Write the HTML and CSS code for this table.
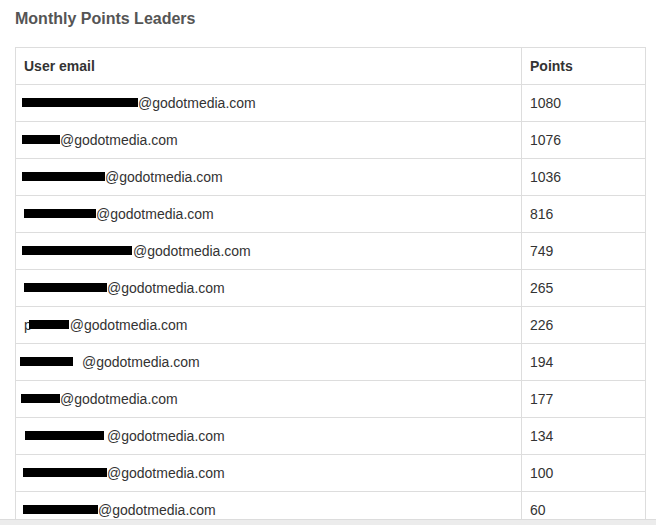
FILE: index.html
```html
<!DOCTYPE html>
<html>
<head>
<meta charset="utf-8">
<link rel="stylesheet" href="styles.css">
</head>
<body>
<div class="page">
  <h4 class="title">Monthly Points Leaders</h4>
  <table class="leaders">
    <thead>
      <tr><th class="col-email">User email</th><th class="col-points">Points</th></tr>
    </thead>
    <tbody>
      <tr><td><span class="redact" style="width:116px;margin-left:-2px"></span>@godotmedia.com</td><td>1080</td></tr>
      <tr><td><span class="redact" style="width:38px;margin-left:-2px"></span>@godotmedia.com</td><td>1076</td></tr>
      <tr><td><span class="redact" style="width:83px;margin-left:-2px"></span>@godotmedia.com</td><td>1036</td></tr>
      <tr><td><span class="redact" style="width:72px"></span>@godotmedia.com</td><td>816</td></tr>
      <tr><td><span class="redact" style="width:110px;margin-left:-2px;margin-right:1px"></span>@godotmedia.com</td><td>749</td></tr>
      <tr><td><span class="redact" style="width:83px"></span>@godotmedia.com</td><td>265</td></tr>
      <tr><td><span class="peek">p</span><span class="redact" style="width:40px;margin-left:-3px;margin-right:1px"></span>@godotmedia.com</td><td>226</td></tr>
      <tr><td><span class="redact" style="width:53px;margin-left:-4px;margin-right:9px"></span>@godotmedia.com</td><td>194</td></tr>
      <tr><td><span class="redact" style="width:39px;margin-left:-3px"></span>@godotmedia.com</td><td>177</td></tr>
      <tr><td><span class="redact" style="width:79px;margin-left:1px;margin-right:3px"></span>@godotmedia.com</td><td>134</td></tr>
      <tr><td><span class="redact" style="width:84px;margin-left:-1px"></span>@godotmedia.com</td><td>100</td></tr>
      <tr><td><span class="redact" style="width:75px;margin-left:-1px"></span>@godotmedia.com</td><td>60</td></tr>
    </tbody>
  </table>
</div>
<div class="hscroll"></div>
</body>
</html>
```
FILE: styles.css
```css
html, body {
  margin: 0;
  padding: 0;
  background: #fff;
}
body {
  font-family: "Liberation Sans", Arial, sans-serif;
  font-size: 14px;
  color: #333;
  overflow: hidden;
}
.page {
  padding: 10px 0 0 15px;
}
.title {
  margin: 0 0 19px 0;
  font-size: 16px;
  line-height: 18px;
  font-weight: bold;
  color: #555;
}
.leaders {
  width: 631px;
  border-collapse: collapse;
  border: 1px solid #ddd;
}
.leaders th,
.leaders td {
  border: 1px solid #ddd;
  padding: 8px;
  line-height: 20px;
  text-align: left;
  vertical-align: top;
  white-space: nowrap;
}
.leaders th {
  font-weight: bold;
}
.col-email {
  width: 489px;
}
.redact {
  display: inline-block;
  height: 9px;
  vertical-align: 1px;
  background: #000;
}
.peek {
  color: #333;
}
.hscroll {
  position: fixed;
  left: 0;
  right: 0;
  bottom: 0;
  height: 5px;
  background: #ececec;
  border-top: 1px solid #dcdcdc;
}
```
